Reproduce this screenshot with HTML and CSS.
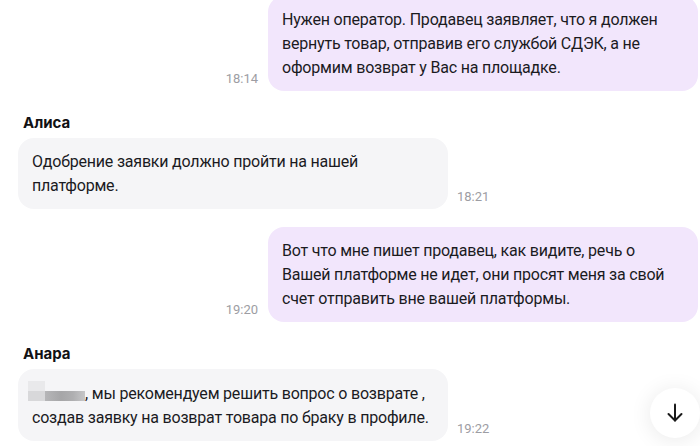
FILE: index.html
```html
<!DOCTYPE html>
<html lang="ru">
<head>
<meta charset="utf-8">
<link rel="stylesheet" href="styles.css">
</head>
<body>
<div class="chat">
  <div class="list">
    <div class="row out">
      <span class="time">18:14</span>
      <div class="bubble bubble-out">Нужен оператор. Продавец заявляет, что я должен вернуть товар, отправив его службой СДЭК, а не оформим возврат у Вас на площадке.</div>
    </div>

    <div class="group in">
      <div class="author">Алиса</div>
      <div class="row">
        <div class="bubble bubble-in">Одобрение заявки должно пройти на нашей платформе.</div>
        <span class="time">18:21</span>
      </div>
    </div>

    <div class="row out row-gap">
      <span class="time">19:20</span>
      <div class="bubble bubble-out">Вот что мне пишет продавец, как видите, речь о Вашей платформе не идет, они просят меня за свой счет отправить вне вашей платформы.</div>
    </div>

    <div class="group in">
      <div class="author">Анара</div>
      <div class="row">
        <div class="bubble bubble-in"><span class="redact"></span>, мы рекомендуем решить вопрос о возврате , создав заявку на возврат товара по браку в профиле.</div>
        <span class="time">19:22</span>
      </div>
    </div>
  </div>

  <button class="scroll-down" aria-label="Вниз">
    <svg width="24" height="24" viewBox="0 0 24 24" fill="none" stroke="#1a1a1a" stroke-width="2" stroke-linecap="round" stroke-linejoin="round"><path d="M12 3.5v16"/><path d="M5.5 13L12 19.5 18.5 13"/></svg>
  </button>
</div>
</body>
</html>
```

FILE: styles.css
```css
* { box-sizing: border-box; }
html, body {
  margin: 0;
  padding: 0;
  background: #ffffff;
}
body {
  font-family: Roboto, "Noto Sans", sans-serif;
  color: #1b1b1f;
  width: 700px;
  height: 446px;
  overflow: hidden;
}
.chat {
  position: relative;
  width: 700px;
  height: 446px;
  overflow: hidden;
}
.list {
  display: flex;
  flex-direction: column;
  margin-top: -4px;
}
.row {
  display: flex;
  align-items: flex-end;
  gap: 9px;
}
.out {
  justify-content: flex-end;
  padding-right: 2px;
  gap: 10px;
}
.row-gap { margin-top: 18px; }
.group {
  display: flex;
  flex-direction: column;
  padding-left: 18px;
  margin-top: 22px;
}
.author {
  font-family: Inter, Roboto, sans-serif;
  font-size: 15px;
  font-weight: 700;
  line-height: 20px;
  padding-left: 5px;
  margin-bottom: 5px;
  color: #111114;
}
.bubble {
  max-width: 430px;
  font-size: 16px;
  line-height: 24px;
  letter-spacing: -0.2px;
  padding: 12px 14px 11px 14px;
  border-radius: 16px;
}
.bubble-out { background: #f2e6fc; }
.bubble-in { background: #f5f5f7; }
.time {
  font-size: 13px;
  line-height: 16px;
  color: #9d9da3;
  margin-bottom: 4px;
  flex: none;
}
.redact {
  display: inline-block;
  width: 57px;
  height: 20px;
  margin-left: -4px;
  vertical-align: -2px;
  background:
    linear-gradient(#e9e9eb, #e9e9eb) 0 0 / 17px 10px no-repeat,
    linear-gradient(#d8d8da, #d8d8da) 0 10px / 17px 10px no-repeat,
    linear-gradient(90deg, #b6b6b8 0%, #a6a6a8 40%, #afafb1 70%, #c6c6c8 100%) 17px 10px / 40px 10px no-repeat;
}
.scroll-down {
  position: absolute;
  right: 0;
  bottom: 8px;
  width: 50px;
  height: 50px;
  border: none;
  border-radius: 50%;
  background: #ffffff;
  box-shadow: 0 2px 22px rgba(0, 0, 0, 0.09);
  display: flex;
  align-items: center;
  justify-content: center;
  padding: 0;
}
```
